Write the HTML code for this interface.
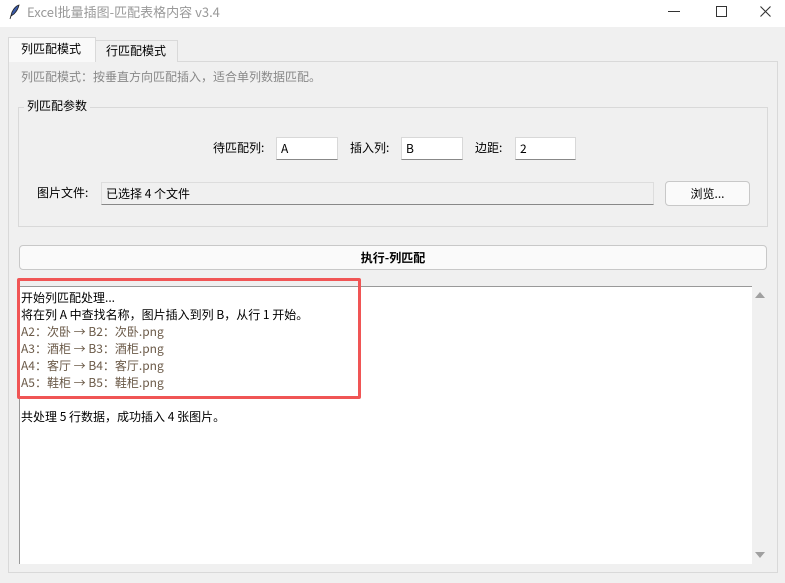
<!DOCTYPE html>
<html><head><meta charset="utf-8"><style>
*{margin:0;padding:0;box-sizing:border-box}
body{width:785px;height:583px;background:#f0f0f0;font-family:"Noto Sans CJK SC","Liberation Sans",sans-serif;font-size:12px;color:#000;position:relative;overflow:hidden;line-height:1.2}
.a{position:absolute}
.title{left:0;top:0;width:785px;height:27px;background:#fff}
.entry{position:absolute;background:#fff;border:1px solid #d8d8d8;border-bottom:1px solid #888;height:23px;padding:3px 4px;font-size:12px;line-height:15px}
.t{position:absolute;white-space:nowrap}
</style></head><body>
<div class="a title"></div>
<svg class="a" style="left:7px;top:4px" width="14" height="16" viewBox="0 0 14 16"><path d="M3 15 L5 8 Q8 2 12 1 Q11 6 7 10 L4 12 Z" fill="#3a5aa8" stroke="#222" stroke-width="0.8"/></svg>
<div class="t" style="left:27px;top:4px;color:#999;font-size:13px">Excel批量插图-匹配表格内容 v3.4</div>
<svg class="a" style="left:660px;top:0" width="125" height="27" viewBox="0 0 125 27"><path d="M8 11.5 H20" stroke="#333" stroke-width="1"/><rect x="56.5" y="6.5" width="10" height="10" fill="none" stroke="#333"/><path d="M100.5 6.5 L110.5 16.5 M110.5 6.5 L100.5 16.5" stroke="#333" stroke-width="1.1"/></svg>
<!-- notebook -->
<div class="a" style="left:8px;top:61px;width:770px;height:512px;border:1px solid #d9d9d9;background:#f0f0f0"></div>
<div class="a" style="left:95px;top:40px;width:83px;height:22px;border:1px solid #d9d9d9;border-bottom:none;background:#f0f0f0"></div>
<div class="t" style="left:106px;top:44px;font-size:12px">行匹配模式</div>
<div class="a" style="left:8px;top:37px;width:88px;height:25px;border:1px solid #d9d9d9;border-bottom:none;background:#f9f9f9"></div>
<div class="t" style="left:21px;top:42px;font-size:12px">列匹配模式</div>
<div class="t" style="left:21px;top:70px;color:#888;font-size:12px">列匹配模式：按垂直方向匹配插入，适合单列数据匹配。</div>
<!-- group -->
<div class="a" style="left:18px;top:107px;width:750px;height:120px;border:1px solid #d9d9d9"></div>
<div class="t" style="left:24px;top:99px;background:#f0f0f0;padding:0 3px;font-size:12px">列匹配参数</div>
<div class="t" style="left:213px;top:141px">待匹配列:</div>
<div class="entry" style="left:276px;top:137px;width:62px">A</div>
<div class="t" style="left:350px;top:141px">插入列:</div>
<div class="entry" style="left:401px;top:137px;width:62px">B</div>
<div class="t" style="left:475px;top:141px">边距:</div>
<div class="entry" style="left:515px;top:137px;width:61px">2</div>
<div class="t" style="left:37px;top:186px">图片文件:</div>
<div class="entry" style="left:101px;top:182px;width:553px;background:#f0f0f0;border-color:#ddd;border-bottom-color:#888">已选择 4 个文件</div>
<div class="a" style="left:665px;top:181px;width:85px;height:25px;border:1px solid #c8c8c8;border-radius:4px;background:#fafafa;text-align:center;line-height:23px">浏览...</div>
<div class="a" style="left:19px;top:245px;width:748px;height:25px;border:1px solid #c8c8c8;border-radius:4px;background:#fafafa;text-align:center;line-height:23px;font-weight:bold">执行-列匹配</div>
<!-- text area -->
<div class="a" style="left:19px;top:286px;width:733px;height:278px;background:#fff;border-left:1px solid #999;border-top:1px solid #999"></div>
<div class="a" style="left:752px;top:286px;width:24px;height:278px;background:#f0f0f0"></div>
<div class="a" style="left:755px;top:292px;width:0;height:0;border-left:5px solid transparent;border-right:5px solid transparent;border-bottom:6px solid #a0a0a0"></div>
<div class="a" style="left:755px;top:552px;width:0;height:0;border-left:5px solid transparent;border-right:5px solid transparent;border-top:6px solid #a0a0a0"></div>
<div class="a" style="left:21px;top:289px;font-size:12px;line-height:17px;white-space:pre">开始列匹配处理...
将在列 A 中查找名称，图片插入到列 B，从行 1 开始。
<span style="color:#6b5a48">A2：次卧 → B2：次卧.png
A3：酒柜 → B3：酒柜.png
A4：客厅 → B4：客厅.png
A5：鞋柜 → B5：鞋柜.png</span>

共处理 5 行数据，成功插入 4 张图片。</div>
<div class="a" style="left:17px;top:278px;width:344px;height:121px;border:3px solid #f05555;border-radius:2px"></div>
</body></html>
